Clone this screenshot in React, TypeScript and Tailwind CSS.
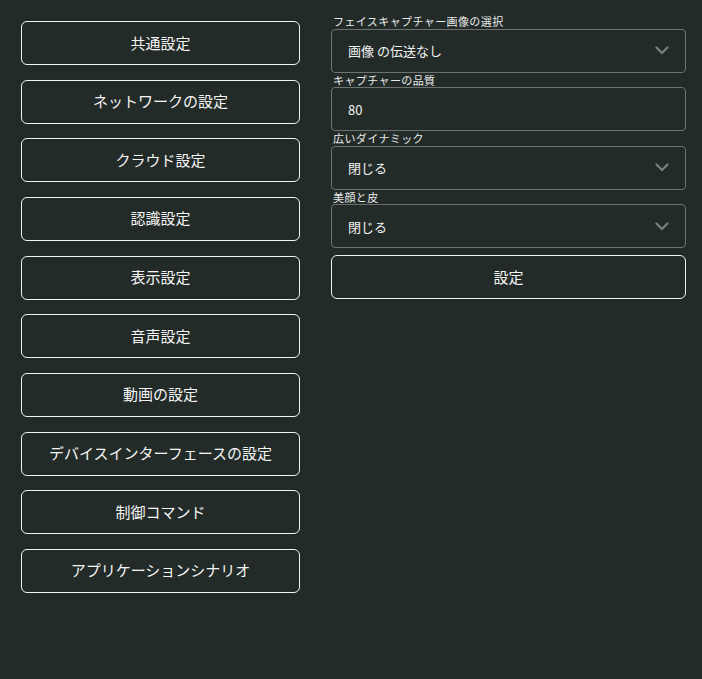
import React from "react";

const menu = [
  "共通設定",
  "ネットワークの設定",
  "クラウド設定",
  "認識設定",
  "表示設定",
  "音声設定",
  "動画の設定",
  "デバイスインターフェースの設定",
  "制御コマンド",
  "アプリケーションシナリオ",
];

const font = { fontFamily: '"Noto Sans CJK JP", "Noto Sans", sans-serif' };

function Chevron() {
  return (
    <svg width="14" height="9" viewBox="0 0 14 9" className="shrink-0">
      <path d="M1.5 1.5 L7 7 L12.5 1.5" fill="none" stroke="#7b807e" strokeWidth="2.2" strokeLinecap="round" strokeLinejoin="round" />
    </svg>
  );
}

function Field({ label, value, select }: { label: string; value: string; select?: boolean }) {
  return (
    <div className="flex flex-col">
      <div className="h-[14.6px] text-[11px] leading-[14px] pl-[2px] tracking-[0.4px] text-[#e8eae9]">{label}</div>
      <div className="h-[44px] rounded-[4px] border border-[#6c7270] flex items-center justify-between pl-[16px] pr-[16px] text-[13px] leading-none text-[#f2f2f2]">
        <span>{value}</span>
        {select && <Chevron />}
      </div>
    </div>
  );
}

export default function App() {
  return (
    <div className="w-[702px] h-[679px] bg-[#232b29] flex items-start pt-[14px] pl-[21px]" style={font}>
      <div className="w-[279px] mt-[7px] flex flex-col gap-[14.67px]">
        {menu.map((m) => (
          <div
            key={m}
            className="h-[44px] rounded-[6px] border border-[#f2f2f2] flex items-center justify-center text-[15px] leading-none pb-[2px] text-[#f4f4f4]"
          >
            {m}
          </div>
        ))}
      </div>
      <div className="w-[355px] ml-[31px] flex flex-col">
        <Field label="フェイスキャプチャー画像の選択" value="画像 の伝送なし" select />
        <Field label="キャプチャーの品質" value="80" />
        <Field label="広いダイナミック" value="閉じる" select />
        <Field label="美顔と皮" value="閉じる" select />
        <div className="mt-[7px] h-[44px] rounded-[6px] border border-[#f2f2f2] flex items-center justify-center text-[15px] leading-none pb-[2px] text-[#f4f4f4]">
          設定
        </div>
      </div>
    </div>
  );
}
